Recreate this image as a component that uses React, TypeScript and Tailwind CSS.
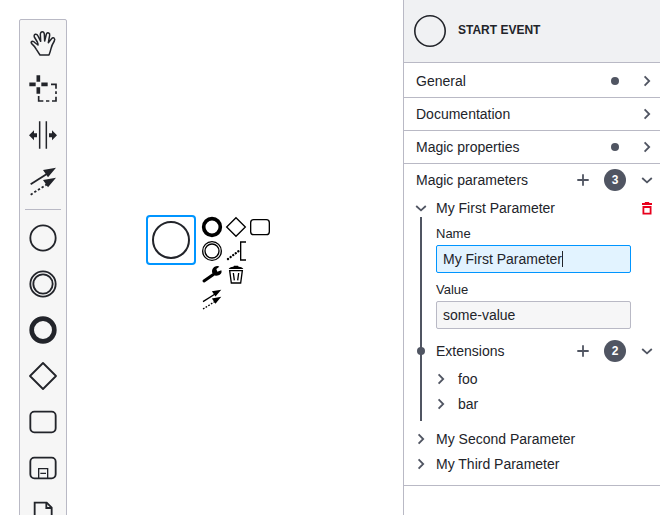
import type { ReactNode } from "react";

type IconProps = { className?: string };

/* ---------- palette icons, drawn on a 138 unit grid ---------- */

function Glyph({ children, className = "size-[46px]" }: { children: ReactNode; className?: string }) {
  return (
    <svg viewBox="0 0 138 138" className={className} fill="none" stroke="currentColor" strokeWidth="5.5" aria-hidden="true">
      {children}
    </svg>
  );
}

const HandIcon = () => (
  <Glyph>
    <path
      strokeWidth="4.5"
      strokeLinejoin="round"
      strokeLinecap="round"
      d="M60 105L49 88Q44 79 35 71Q31 65 37 64Q41 64 46 69L54 75Q55 73 52 66L43 51Q41 44 46 43Q51 42 54 48L62 64L61 42Q62 35 67 35Q72 35 73 42L74 63L79 43Q81 37 86 39Q90 41 89 46L85 68L94 57Q98 52 102 54Q106 57 103 63Q95 76 93 86Q91 95 87 105Z"
    />
  </Glyph>
);

const LassoIcon = () => (
  <Glyph>
    <path strokeWidth="11" d="M55 28V47M55 64V83M28 55H47M64 55H83" />
    <path strokeWidth="5" d="M93 55H108V68M108 76V84M108 92V105H96M88 105H78M70 105H56V90" />
  </Glyph>
);

const SpaceIcon = () => (
  <Glyph>
    <path strokeWidth="4.5" d="M59 28V110M79 28V110" />
    <path stroke="none" fill="currentColor" d="M27 70L42 55V64H51V76H42V85ZM111 70L96 55V64H87V76H96V85Z" />
  </Glyph>
);

const ConnectPaths = () => (
  <>
    <path d="M32 79L84 46" />
    <path strokeDasharray="7 6" d="M32 110L84 77" />
    <path stroke="none" fill="currentColor" d="M108 29L69 36L84 58ZM108 59L69 66L84 88Z" />
  </>
);

const ConnectIcon = () => (
  <Glyph>
    <ConnectPaths />
  </Glyph>
);

const StartIcon = () => (
  <Glyph>
    <circle cx="69" cy="69" r="38" />
  </Glyph>
);

const IntermediateIcon = () => (
  <Glyph>
    <circle cx="69" cy="69" r="38" />
    <circle cx="69" cy="69" r="29" />
  </Glyph>
);

const EndIcon = () => (
  <Glyph>
    <circle cx="69" cy="69" r="34" strokeWidth="14" />
  </Glyph>
);

const GatewayIcon = () => (
  <Glyph>
    <path strokeLinejoin="round" d="M69 30L108 69L69 108L30 69Z" />
  </Glyph>
);

const TaskIcon = () => (
  <Glyph>
    <rect x="31" y="38" width="76" height="62" rx="12" />
  </Glyph>
);

const SubProcessIcon = () => (
  <Glyph>
    <rect x="31" y="38" width="76" height="62" rx="12" />
    <path strokeWidth="4" d="M56 100V71H83V100M61 85H78" />
  </Glyph>
);

const DataObjectIcon = () => (
  <Glyph>
    <path d="M44 109V35H80L95 50V109Z" />
    <path d="M79 35V51H95" />
  </Glyph>
);

/* ---------- context pad icons, drawn on a 72 unit grid ---------- */

function PadGlyph({ children }: { children: ReactNode }) {
  return (
    <svg viewBox="0 0 72 72" className="size-6" fill="none" stroke="currentColor" strokeWidth="4" aria-hidden="true">
      {children}
    </svg>
  );
}

const padItems: { label: string; cell: string; icon: ReactNode }[] = [
  { label: "Append end event", cell: "col-start-1 row-start-1", icon: <circle cx="36" cy="36" r="25" strokeWidth="11" /> },
  { label: "Append gateway", cell: "col-start-2 row-start-1", icon: <path d="M36 8L64 36L36 64L8 36Z" /> },
  { label: "Append task", cell: "col-start-3 row-start-1", icon: <rect x="8" y="14" width="56" height="45" rx="9" strokeWidth="4" /> },
  {
    label: "Append intermediate event",
    cell: "col-start-1 row-start-2",
    icon: (
      <>
        <circle cx="36" cy="36" r="28" />
        <circle cx="36" cy="36" r="21" />
      </>
    ),
  },
  {
    label: "Add text annotation",
    cell: "col-start-2 row-start-2",
    icon: (
      <>
        <path strokeWidth="4" d="M66 9H50V63H66" />
        <path strokeWidth="7" strokeLinecap="round" strokeDasharray="0.1 9.6" d="M12 60L44 36" />
      </>
    ),
  },
  {
    label: "Change element",
    cell: "col-start-1 row-start-3",
    icon: (
      <>
        <path strokeWidth="9" strokeLinecap="round" d="M12 54L39 35" />
        <path
          stroke="none"
          fill="currentColor"
          d="M36 28Q35 14 48 10Q54 8 58 11L49 18L52 26L64 22Q67 31 58 36Q49 40 41 37Z"
        />
      </>
    ),
  },
  {
    label: "Delete",
    cell: "col-start-2 row-start-3",
    icon: (
      <>
        <path stroke="none" fill="currentColor" d="M14 18Q16 12 28 11L30 8H42L44 11Q56 12 58 18Z" />
        <path d="M17 23H55L50 60H22Z" />
        <path strokeWidth="4" d="M28 30L31 52M44 30L41 52" />
      </>
    ),
  },
  {
    label: "Connect",
    cell: "col-start-1 row-start-4",
    icon: (
      <g transform="translate(-14 -13) scale(0.72)" strokeWidth="5.5">
        <ConnectPaths />
      </g>
    ),
  },
];

/* ---------- palette ---------- */

const tools = [
  { label: "Hand tool", Icon: HandIcon },
  { label: "Lasso tool", Icon: LassoIcon },
  { label: "Space tool", Icon: SpaceIcon },
  { label: "Connect tool", Icon: ConnectIcon },
];

const shapes = [
  { label: "Start event", Icon: StartIcon },
  { label: "Intermediate event", Icon: IntermediateIcon },
  { label: "End event", Icon: EndIcon },
  { label: "Gateway", Icon: GatewayIcon },
  { label: "Task", Icon: TaskIcon },
  { label: "Sub-process", Icon: SubProcessIcon },
  { label: "Data object", Icon: DataObjectIcon },
];

function Palette() {
  return (
    <div className="flex shrink-0 flex-col self-start rounded-xs border border-[#b9b9c5] bg-[#f6f6f6]">
      {tools.map(({ label, Icon }) => (
        <button key={label} type="button" aria-label={label}>
          <Icon />
        </button>
      ))}
      <hr className="m-[5px] border-[#b9b9c5]" />
      {shapes.map(({ label, Icon }) => (
        <button key={label} type="button" aria-label={label}>
          <Icon />
        </button>
      ))}
    </div>
  );
}

/* ---------- properties panel ---------- */

function Chevron({ open = false, className = "" }: IconProps & { open?: boolean }) {
  return (
    <svg viewBox="0 0 16 16" className={`size-4 shrink-0 ${className}`} fill="none" stroke="#505562" strokeWidth="1.8" aria-hidden="true">
      {open ? <path d="M3.2 6L8 10.4L12.8 6" /> : <path d="M5.6 3.3L10.2 8L5.6 12.7" />}
    </svg>
  );
}

function AddButton({ label }: { label: string }) {
  return (
    <button type="button" aria-label={label} className="flex w-8 justify-center">
      <svg viewBox="0 0 12 12" className="size-3" stroke="#505562" strokeWidth="1.8" aria-hidden="true">
        <path d="M6 0.3V11.7M0.3 6H11.7" />
      </svg>
    </button>
  );
}

function Count({ value }: { value: number }) {
  return (
    <span className="flex w-8 justify-center">
      <span className="flex size-[22px] items-center justify-center rounded-full bg-[#505562] text-xs font-bold text-white">
        {value}
      </span>
    </span>
  );
}

function GroupHeader({ title, edited, count, open }: { title: string; edited?: boolean; count?: number; open?: boolean }) {
  return (
    <div className="flex h-8 items-center pr-[5px]">
      <button type="button" aria-expanded={!!open} className="flex-1 text-left">
        {title}
      </button>
      {count !== undefined && <AddButton label={`Add to ${title}`} />}
      {count !== undefined && <Count value={count} />}
      {edited && (
        <span className="flex w-8 justify-center">
          <span className="size-2 rounded-full bg-[#505562]" />
        </span>
      )}
      <button type="button" aria-label={`Toggle ${title}`} className="ml-2">
        <Chevron open={open} />
      </button>
    </div>
  );
}

function Item({ title, gap = "gap-[7px]" }: { title: string; gap?: string }) {
  return (
    <button type="button" className={`flex h-[25px] w-full items-center pb-px leading-6 ${gap}`}>
      <Chevron />
      {title}
    </button>
  );
}

function PropertiesPanel() {
  return (
    <aside className="w-[257px] shrink-0 border-l border-[#b9b9c5] bg-white text-sm">
      <header className="flex h-[63px] items-center gap-3 border-b border-[#b9b9c5] bg-[#f0f1f3] pl-[10px]">
        <svg viewBox="0 0 32 32" className="size-8" fill="none" stroke="currentColor" strokeWidth="1.6" aria-hidden="true">
          <circle cx="16" cy="16" r="15.2" />
        </svg>
        <h1 className="pb-0.5 text-xs font-bold">START EVENT</h1>
      </header>

      <section className="border-b border-[#b9b9c5] pt-[2px] pl-3">
        <GroupHeader title="General" edited />
      </section>
      <section className="border-b border-[#b9b9c5] pl-3">
        <GroupHeader title="Documentation" />
      </section>
      <section className="border-b border-[#b9b9c5] pl-3">
        <GroupHeader title="Magic properties" edited />
      </section>

      <section className="border-b border-[#b9b9c5] pb-2 pl-3">
        <GroupHeader title="Magic parameters" count={3} open />

        <div className="flex h-[25px] items-center pr-[5px] pb-px">
          <button type="button" aria-expanded="true" className="-ml-[3px] flex flex-1 items-center gap-[7px] text-left leading-6">
            <Chevron open />
            My First Parameter
          </button>
          <button type="button" aria-label="Remove parameter">
            <svg viewBox="0 0 16 16" className="size-4" fill="none" stroke="#e8001c" strokeWidth="1.8" aria-hidden="true">
              <path d="M3 4H13M5.8 2.9H10.2M4.4 7H11.6V13.6H4.4Z" />
            </svg>
          </button>
        </div>

        <div className="relative mb-[10px] pl-5">
          <span className="absolute -top-1 -bottom-1 left-1 w-[2px] bg-[#505562]" />
          <div className="pr-[29px]">
            <label htmlFor="param-name" className="block pt-0.5 text-[13px] leading-[22px]">
              Name
            </label>
            <div className="relative">
              <input
                id="param-name"
                defaultValue="My First Parameter"
                className="block h-7 w-full rounded-xs border border-[#0095ff] bg-[#e2f3ff] px-[6px] outline-none"
              />
              <span className="absolute top-[6px] left-[126px] h-4 w-px bg-[#22242a]" />
            </div>
            <label htmlFor="param-value" className="mt-1 block pt-0.5 text-[13px] leading-[22px]">
              Value
            </label>
            <input
              id="param-value"
              defaultValue="some-value"
              className="block h-7 w-full rounded-xs border border-[#b9b9c5] bg-[#f6f6f7] px-[6px] outline-none"
            />
          </div>
          <div className="relative mt-[6px]">
            <span className="absolute top-3 -left-[19px] size-2 rounded-full bg-[#505562]" />
            <GroupHeader title="Extensions" count={2} open />
          </div>
          <div className="-ml-[3px]">
            <Item title="foo" gap="gap-[9px]" />
            <Item title="bar" gap="gap-[9px]" />
          </div>
        </div>

        <div className="-ml-[3px]">
          <Item title="My Second Parameter" />
          <Item title="My Third Parameter" />
        </div>
      </section>
    </aside>
  );
}

/* ---------- diagram canvas ---------- */

function Canvas() {
  return (
    <main className="relative flex min-w-0 flex-1 overflow-hidden pt-[19px] pl-[19px]">
      <Palette />
      <div className="absolute top-[215px] left-[146px] flex size-[50px] items-center justify-center rounded-sm border-2 border-[#0095ff]">
        <svg viewBox="0 0 40 40" className="size-10" fill="white" stroke="currentColor" strokeWidth="2" role="img" aria-label="Start event">
          <circle cx="20" cy="20" r="18" />
        </svg>
      </div>
      <div className="absolute top-[215px] left-[200px] grid grid-cols-3 text-black">
        {padItems.map(({ label, cell, icon }) => (
          <button key={label} type="button" aria-label={label} className={cell}>
            <PadGlyph>{icon}</PadGlyph>
          </button>
        ))}
      </div>
    </main>
  );
}

export default function App() {
  return (
    <div className="flex h-screen overflow-hidden bg-white font-['Liberation_Sans',Arial,sans-serif] text-[#22242a]">
      <Canvas />
      <PropertiesPanel />
    </div>
  );
}
